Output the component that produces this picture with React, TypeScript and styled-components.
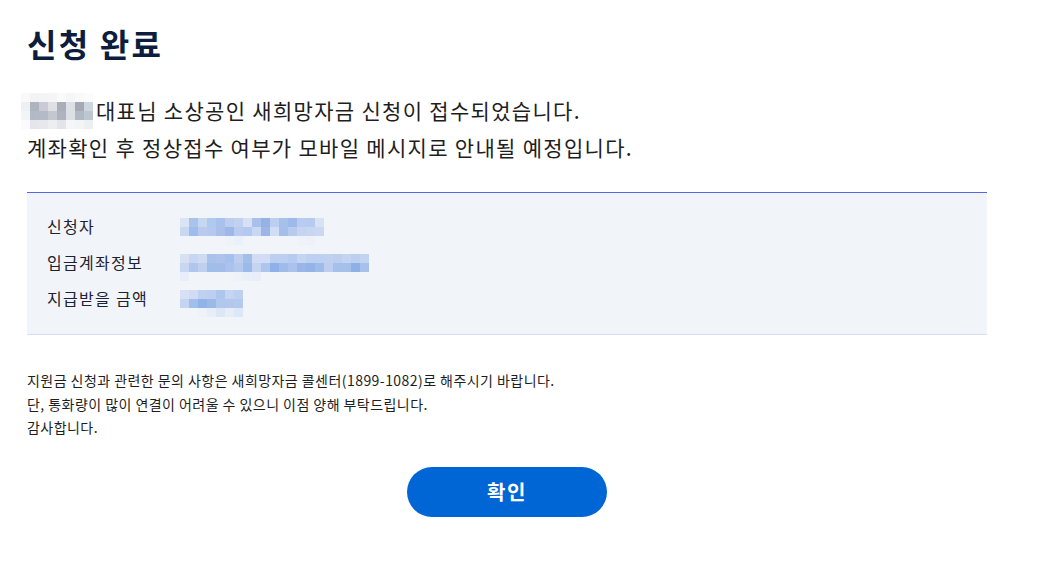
import React from 'react'
import styled, { createGlobalStyle } from 'styled-components'

const GlobalStyle = createGlobalStyle`
  body {
    margin: 0;
    background: #ffffff;
    font-family: "Noto Sans CJK KR", "Noto Sans", sans-serif;
    color: #222222;
  }
`

const Page = styled.div`
  width: 960px;
  padding: 20px 0 0 27px;
`

const Title = styled.h1`
  margin: 0;
  font-size: 32px;
  font-weight: 700;
  line-height: 46px;
  color: #0d1d3d;
  letter-spacing: 2.2px;
`

const Lead = styled.div`
  margin-top: 26px;
  font-size: 21px;
  line-height: 37px;
  letter-spacing: 1.3px;
  color: #1e1e1e;
`

const LeadLine = styled.div`
  display: flex;
  align-items: center;
  height: 37px;
`

const Mosaic = styled.div<{ cols: number; cell: number }>`
  display: grid;
  grid-template-columns: repeat(${({ cols }) => cols}, ${({ cell }) => cell}px);
  grid-auto-rows: ${({ cell }) => cell}px;
  flex-shrink: 0;
`

const NameMosaic = styled(Mosaic)`
  margin: 0 3px 0 -6px;
`

const Cell = styled.span``

const InfoBox = styled.div`
  margin-top: 26px;
  background: #f1f4f9;
  border-top: 1px solid #5468e4;
  border-bottom: 1px solid #d8ddf5;
  padding: 23px 20px 19px;
  display: flex;
  flex-direction: column;
  gap: 9px;
`

const InfoRow = styled.div`
  display: grid;
  grid-template-columns: 133px 1fr;
  align-items: start;
  height: 27px;
`

const Label = styled.span`
  font-size: 16px;
  line-height: 20px;
  color: #1c2230;
  letter-spacing: 1.3px;
`

const ValueMosaic = styled(Mosaic)`
  margin-top: 2px;
`

const Notes = styled.p`
  margin: 34px 0 0;
  font-size: 14px;
  line-height: 23.5px;
  letter-spacing: 0.45px;
  color: #1e1e1e;
`

const Actions = styled.div`
  display: flex;
  justify-content: center;
  margin-top: 27px;
`

const ConfirmButton = styled.button`
  width: 200px;
  height: 50px;
  border: none;
  border-radius: 25px;
  background: #0066d6;
  color: #ffffff;
  font-family: inherit;
  font-size: 20px;
  font-weight: 700;
  letter-spacing: 1.5px;
  cursor: pointer;
`

type Grid = string[][]

const nameCells: Grid = [
  ['#f9f9fa', '#f3f3f5', '#f3f4f6', '#f5f5f7', '#fafafa', '#f6f6f8', '#f9f9fa', '#fbfbfc'],
  ['#eef0f2', '#aeb3c0', '#c8cad6', '#dfe0e4', '#a9aeb9', '#dde0e5', '#a4aab4', '#d0d6de'],
  ['#f3f4f5', '#b4b9c6', '#b6bac6', '#c2c7d0', '#aeb3bf', '#dcdfe4', '#b3b9c3', '#bcc7d0'],
  ['#fbfbfc', '#e4e6ec', '#e6e8ec', '#eceef1', '#e1e4e9', '#f5f6f7', '#f3f4f6', '#edf0f3'],
]

const applicantCells: Grid = [
  ['#dbe3f4', '#a8c3ec', '#c7d6f1', '#afcaef', '#a9c1ec', '#bccdee', '#c1d2f0', '#d6e1f5', '#a9c0ea', '#95b2e5', '#bbd0f1', '#a6c0ea', '#9ebaea', '#b9cbee', '#b7cbee', '#d8e2f5'],
  ['#c8d7f2', '#9fbdea', '#b9caee', '#b6c8ee', '#aac0eb', '#9db7e6', '#b9cbef', '#b4c9ef', '#c9d7f2', '#9db6e5', '#d1ddf4', '#a5bfea', '#b7cbee', '#c5d5f1', '#c7d6f1', '#cbd8f2'],
  ['#f1f4f9', '#f1f4f9', '#f1f4f9', '#f1f4f9', '#f1f4f9', '#eef2f9', '#ebf1fa', '#f1f4f9', '#f1f4f9', '#f1f4f9', '#f1f4f9', '#f1f4f9', '#f1f4f9', '#eff3f9', '#ecf1fa', '#f1f4f9'],
]

const accountCells: Grid = [
  ['#d8e1f4', '#c8d6f2', '#cfdaf3', '#a9c1ec', '#adc3ec', '#a5c0ec', '#bccdee', '#a2bfea', '#d2dcf4', '#d2dcf4', '#bccff0', '#bccff0', '#b6cbef', '#c5d5f1', '#bcd0f1', '#bcd0f1', '#c0d1f0', '#bccff0', '#c3d3f1', '#bccff0', '#c2d4f1'],
  ['#c8d6f2', '#b1c6ec', '#bfd0ef', '#a1bdea', '#a2bdea', '#a9c3ec', '#b5c8ee', '#9bbae9', '#c5d5f1', '#adc6ee', '#90b1e7', '#9fbbe9', '#abc3ec', '#9ab6e8', '#95b3e6', '#9fbbe9', '#bdcef0', '#a4c0eb', '#a4c0eb', '#8fb0e7', '#a7c1eb'],
  ['#e8eef9', '#f1f4f9', '#f1f4f9', '#f1f4f9', '#f1f4f9', '#f1f4f9', '#eff3f9', '#eaf0fa', '#e8eef9', '#f1f4f9', '#f1f4f9', '#f1f4f9', '#f1f4f9', '#f1f4f9', '#f1f4f9', '#f1f4f9', '#f1f4f9', '#f1f4f9', '#f1f4f9', '#f1f4f9', '#f1f4f9'],
]

const amountCells: Grid = [
  ['#d7e0f4', '#cfdcf4', '#bfd1f1', '#bccff0', '#adc6ee', '#c5d4f1', '#bed0f0'],
  ['#c5d4f1', '#a2bfec', '#93b3e8', '#9db9e8', '#b0c8ee', '#b3c6ec', '#b3c9ee'],
  ['#f1f4f9', '#f1f4f9', '#eef2f9', '#e8eef9', '#dbe6f7', '#e6edf9', '#dce7f7'],
]

function Pixelated({ cells, as: Comp = Mosaic }: { cells: Grid; as?: typeof Mosaic }) {
  return (
    <Comp cols={cells[0].length} cell={9} aria-hidden>
      {cells.flatMap((row, r) =>
        row.map((c, i) => <Cell key={`${r}-${i}`} style={{ background: c }} />)
      )}
    </Comp>
  )
}

const info: { label: string; cells: Grid }[] = [
  { label: '신청자', cells: applicantCells },
  { label: '입금계좌정보', cells: accountCells },
  { label: '지급받을 금액', cells: amountCells },
]

export default function App() {
  return (
    <>
      <GlobalStyle />
      <Page>
        <Title>신청 완료</Title>
        <Lead>
          <LeadLine>
            <Pixelated cells={nameCells} as={NameMosaic} />
            대표님 소상공인 새희망자금 신청이 접수되었습니다.
          </LeadLine>
          <LeadLine>계좌확인 후 정상접수 여부가 모바일 메시지로 안내될 예정입니다.</LeadLine>
        </Lead>
        <InfoBox>
          {info.map(row => (
            <InfoRow key={row.label}>
              <Label>{row.label}</Label>
              <Pixelated cells={row.cells} as={ValueMosaic} />
            </InfoRow>
          ))}
        </InfoBox>
        <Notes>
          지원금 신청과 관련한 문의 사항은 새희망자금 콜센터(1899-1082)로 해주시기 바랍니다.
          <br />
          단, 통화량이 많이 연결이 어려울 수 있으니 이점 양해 부탁드립니다.
          <br />
          감사합니다.
        </Notes>
        <Actions>
          <ConfirmButton type="button">확인</ConfirmButton>
        </Actions>
      </Page>
    </>
  )
}
